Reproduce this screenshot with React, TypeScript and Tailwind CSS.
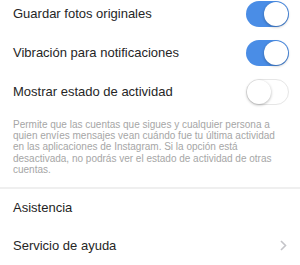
import * as React from "react";

const Toggle = ({ on }: { on: boolean }) => {
  return (
    <div
      className={
        on
          ? "relative w-[43px] h-[26px] rounded-full bg-[#4a8de6]"
          : "relative w-[43px] h-[26px] rounded-full bg-white border border-[#e6e6e6]"
      }
    >
      <div
        className={
          on
            ? "absolute top-[1px] right-[1px] w-[24px] h-[24px] rounded-full bg-white shadow-[0_1px_3px_rgba(0,0,0,0.3)]"
            : "absolute top-[0px] left-[0px] w-[24px] h-[24px] rounded-full bg-white shadow-[0_1px_3px_rgba(0,0,0,0.3)]"
        }
      />
    </div>
  );
};

const SwitchRow = ({ label, on }: { label: string; on: boolean }) => (
  <div className="flex items-center justify-between h-[39px] pl-[13px] pr-[11px]">
    <span className="text-[13px] text-[#262626]">{label}</span>
    <Toggle on={on} />
  </div>
);

export default function App() {
  return (
    <div className="w-[300px] h-[265px] overflow-hidden bg-white font-['Liberation_Sans',Arial,sans-serif]">
      <div className="-mt-[6px]">
        <SwitchRow label="Guardar fotos originales" on={true} />
        <SwitchRow label="Vibración para notificaciones" on={true} />
        <SwitchRow label="Mostrar estado de actividad" on={false} />
      </div>

      <div className="pt-[8px] px-[13px] text-[10px] leading-[11.2px] text-[#a6a6a6]">
        <span className="block whitespace-nowrap">
          Permite que las cuentas que sigues y cualquier persona a
        </span>
        <span className="block whitespace-nowrap">
          quien envíes mensajes vean cuándo fue tu última actividad
        </span>
        <span className="block whitespace-nowrap">
          en las aplicaciones de Instagram. Si la opción está
        </span>
        <span className="block whitespace-nowrap">
          desactivada, no podrás ver el estado de actividad de otras
        </span>
        <span className="block whitespace-nowrap">cuentas.</span>
      </div>

      <div className="mt-[12px] h-[2px] bg-[#efefef]" />

      <div className="flex items-center h-[37px] pl-[13px]">
        <span className="text-[13px] text-[#1f1f1f]">Asistencia</span>
      </div>
      <div className="flex items-center justify-between h-[39px] pl-[13px] pr-[13px]">
        <span className="text-[13px] text-[#262626]">Servicio de ayuda</span>
        <svg width="7" height="11" viewBox="0 0 7 11" fill="none">
          <path d="M1 1L5.5 5.5L1 10" stroke="#c4c4c8" strokeWidth="1.6" />
        </svg>
      </div>
    </div>
  );
}
